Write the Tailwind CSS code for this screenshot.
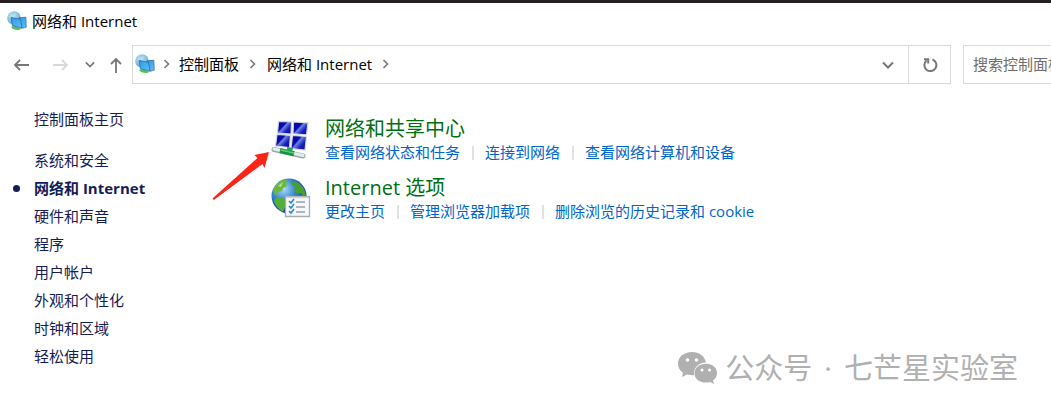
<!DOCTYPE html>
<html lang="zh-CN">
<head>
  <meta charset="UTF-8">
  <title>网络和 Internet</title>
  <script src="https://cdn.jsdelivr.net/npm/@tailwindcss/browser@4"></script>
</head>
<body class="relative min-h-screen overflow-hidden bg-white font-['Open_Sans','Noto_Sans_CJK_SC',sans-serif] text-[15px] leading-5 text-black">
  <svg class="absolute size-0" aria-hidden="true">
    <defs>
      <linearGradient id="screen" x1="0" y1="0" x2="1" y2="1">
        <stop offset="0" stop-color="#2a96ea"/><stop offset="1" stop-color="#5cc2fb"/>
      </linearGradient>
      <linearGradient id="navy" x1="0" y1="0" x2="1" y2=".8">
        <stop offset="0" stop-color="#0508a0"/><stop offset=".42" stop-color="#0a0dae"/><stop offset=".5" stop-color="#6c86e2"/><stop offset=".75" stop-color="#1a20bc"/><stop offset="1" stop-color="#0a0ca8"/>
      </linearGradient>
      <radialGradient id="ocean" cx=".35" cy=".3" r=".75">
        <stop offset="0" stop-color="#a9dcf5"/><stop offset=".45" stop-color="#3485d0"/><stop offset="1" stop-color="#0c2f86"/>
      </radialGradient>
      <radialGradient id="pale" cx=".4" cy=".35" r=".7">
        <stop offset="0" stop-color="#d9f0fa"/><stop offset="1" stop-color="#4a9cc8"/>
      </radialGradient>
      <symbol id="network" viewBox="0 0 20 20">
        <circle cx="7" cy="7" r="6.800" fill="url(#pale)"/>
        <path d="M1.500 5q4-2 6-4.500M1 9.500q6-4 12-5M7 1q-3 5-2 12" fill="none" stroke="#8fc9e2" stroke-width=".8"/>
        <path d="M4.500 15.500q4-1 9 2l-1 1.500q-5 .5-8-2z" fill="#4cc552"/>
        <path d="M12 6.800l6.800-.6.400 10-5 1z" fill="url(#screen)" stroke="#2b6f9f" stroke-width=".8"/>
        <path d="M4 6.500l9.500 1.800 1.500 8.700-9.500-2.200z" fill="url(#screen)" stroke="#2b6f9f" stroke-width=".8"/>
        <path d="M13 18l5-1.500" stroke="#9aa9b3" stroke-width="1"/>
      </symbol>
      <symbol id="crumb" viewBox="0 0 8 10"><path d="M1.500 1l4 4-4 4" fill="none" stroke="#777" stroke-width="1.600"/></symbol>
      <symbol id="down" viewBox="0 0 12 8"><path d="M1 1.500l5 5 5-5" fill="none" stroke="#777" stroke-width="2"/></symbol>
    </defs>
  </svg>

  <div class="h-[3px] bg-[#231f20]"></div>

  <header>
    <div class="flex h-[42px] items-center gap-[5px] pb-[6px] pl-[7px]">
      <svg class="size-5"><use href="#network"/></svg>
      <h1>网络和 Internet</h1>
    </div>
    <div class="flex h-[39px] items-center">
      <nav class="flex w-[132px] shrink-0 items-center pl-[13px]" aria-label="导航">
        <button class="mr-[22px]" aria-label="后退">
          <svg class="h-4 w-[17px]" fill="none" stroke="#777" stroke-width="1.800"><path d="M16 8H2M7 3L2 8l5 5"/></svg>
        </button>
        <button class="mr-4" aria-label="前进">
          <svg class="h-4 w-[17px]" fill="none" stroke="#d9d9d9" stroke-width="1.800"><path d="M1 8h14M10 3l5 5-5 5"/></svg>
        </button>
        <button class="mr-[14px]" aria-label="最近的位置"><svg class="h-[7px] w-[10px]"><use href="#down"/></svg></button>
        <button aria-label="上移">
          <svg class="mt-[2px] h-[17px] w-[14px]" fill="none" stroke="#777" stroke-width="1.800"><path d="M7 16V2M2 7l5-5 5 5"/></svg>
        </button>
      </nav>
      <div class="flex h-full flex-1 items-center border border-[#d9d9d9] pl-[2px]">
        <div class="flex items-center pb-[2px]">
          <svg class="size-5"><use href="#network"/></svg>
          <svg class="mx-2 h-[10px] w-2"><use href="#crumb"/></svg>
          <a href="#">控制面板</a>
          <svg class="mx-[10px] h-[10px] w-2"><use href="#crumb"/></svg>
          <a href="#">网络和 Internet</a>
          <svg class="mx-[10px] h-[10px] w-2"><use href="#crumb"/></svg>
        </div>
        <button class="mr-[14px] ml-auto" aria-label="历史地址"><svg class="h-2 w-3"><use href="#down"/></svg></button>
        <button class="flex h-full w-[42px] items-center justify-center border-l border-[#d9d9d9]" aria-label="刷新">
          <svg class="size-4" fill="none" stroke="#777" stroke-width="2"><path d="M10.500 2.500A6 6 0 1 1 4.500 3.500M2 2.200h4.200v4.300"/></svg>
        </button>
      </div>
      <input type="text" aria-label="搜索控制面板" placeholder="搜索控制面板" class="ml-3 h-full w-[88px] border border-r-0 border-[#d9d9d9] pb-[2px] pl-[9px] outline-none placeholder:text-[#6d6d6d]">
    </div>
  </header>

  <div class="flex pt-[25px]">
    <aside class="w-[271px] shrink-0 pl-[34px] text-[#151c55]">
      <a href="#" class="block">控制面板主页</a>
      <ul class="mt-[21px] flex flex-col gap-2">
        <li><a href="#">系统和安全</a></li>
        <li class="relative font-bold before:absolute before:top-[7px] before:-left-[21px] before:size-[7px] before:rounded-full before:bg-[#151c55]"><a href="#" aria-current="page">网络和 Internet</a></li>
        <li><a href="#">硬件和声音</a></li>
        <li><a href="#">程序</a></li>
        <li><a href="#">用户帐户</a></li>
        <li><a href="#">外观和个性化</a></li>
        <li><a href="#">时钟和区域</a></li>
        <li><a href="#">轻松使用</a></li>
      </ul>
    </aside>

    <main class="flex flex-col gap-[9px] pt-2 text-[#0066cc]">
      <section class="flex gap-[14px]">
        <svg class="mt-[3px] size-10 shrink-0" viewBox="0 0 40 40">
          <g fill="url(#navy)" stroke="#d8d9df" stroke-width="1.200">
            <path d="M7.500 1.500l13 .5-.5 12-13.500-.8z"/><path d="M22.500 2l14.500 .8-1.500 12-13.500-1z"/>
            <path d="M6 14.500l13.500.8-1 12.200-14-1.500z"/><path d="M21.500 15.500l14 1-1.500 13.500-14-1.500z"/>
          </g>
          <path d="M3 29.500l29 6.500" stroke="#9ba6a6" stroke-width="5" stroke-linecap="round"/>
          <path d="M3 29l29 6.500" stroke="#e4eded" stroke-width="3" stroke-linecap="round"/>
          <path d="M9 30.500l14 3.200" stroke="#179342" stroke-width="5"/>
          <path d="M10 30l13 3" stroke="#5ed180" stroke-width="1.500"/>
          <path d="M16 27l6 1-1 4-5-1z" fill="#26a650"/>
        </svg>
        <div>
          <h2 class="text-xl leading-6 text-[#006f12]"><a href="#">网络和共享中心</a></h2>
          <div class="mt-px flex h-[25px] items-start">
            <a href="#">查看网络状态和任务</a>
            <span class="mr-[11px] ml-3 mt-1 h-[14px] w-[2px] bg-[#e2e2e2]"></span>
            <a href="#">连接到网络</a>
            <span class="mr-[11px] ml-3 mt-1 h-[14px] w-[2px] bg-[#e2e2e2]"></span>
            <a href="#">查看网络计算机和设备</a>
          </div>
        </div>
      </section>

      <section class="flex gap-[14px]">
        <svg class="mt-[2px] size-10 shrink-0" viewBox="0 0 40 40">
          <circle cx="18" cy="18" r="17.500" fill="url(#ocean)"/>
          <path d="M2 12Q5 4 13 1.500l4 1.500-2 3 1 2-4 2-1 3-4 1-1 3-3-1z" fill="#6cb83f"/>
          <path d="M5 20l5-1 5 3 2 3-3 4-2 5q-7-4-9-11z" fill="#55ae38"/>
          <path d="M20 3q9 1 13 8l2 6-3 1-2-3-4 1-3-4 1-3-4-3z" fill="#489e32"/>
          <path d="M7 8l5-4-2 5z" fill="#b9e08a"/>
          <path d="M14.500 18.500h24v20h-24z" fill="#f6f7f8" stroke="#a5acb2" stroke-width="1.300"/>
          <path d="M15 19.500h23" stroke="#cfd4d8" stroke-width="1.500"/>
          <path d="M25 24h9M25 29h9M25 34h9" stroke="#65748b" stroke-width="1.200"/>
          <path d="M18 23l2 2 3-4M18 28l2 2 3-4M18 33l2 2 3-4" fill="none" stroke="#248bc8" stroke-width="1.600"/>
        </svg>
        <div>
          <h2 class="text-xl leading-6 text-[#006f12]"><a href="#">Internet 选项</a></h2>
          <div class="mt-px flex h-[25px] items-start">
            <a href="#">更改主页</a>
            <span class="mr-[11px] ml-3 mt-1 h-[14px] w-[2px] bg-[#e2e2e2]"></span>
            <a href="#">管理浏览器加载项</a>
            <span class="mr-[11px] ml-3 mt-1 h-[14px] w-[2px] bg-[#e2e2e2]"></span>
            <a href="#">删除浏览的历史记录和 cookie</a>
          </div>
        </div>
      </section>
    </main>
  </div>

  <!-- annotation arrow -->
  <svg class="absolute top-[150px] left-[211px] h-[52px] w-[60px]" fill="#fb2416"><path d="M58 2L43.500 5l3 3L1.500 48.500q.5 1.500 2 1L51.500 14l2 4z"/></svg>

  <!-- channel watermark -->
  <div class="absolute right-[33px] bottom-6 flex items-center gap-3 text-[29px] leading-9 text-[#b0b0b0]">
    <svg class="-mr-1 h-8 w-[39px]" viewBox="0 0 39 32" fill="#b0b0b0">
      <path d="M14 0C6 0 0 5 0 11.700c0 4 2 7 5 9L4 25l5-2.500q4 1 7 .7C15 15 22 10 28 10.500 26.500 4 21 0 14 0z"/>
      <path d="M28 11.700c-6.500 0-11.500 4-11.500 9.500S21 30.500 28 30.500q2 0 4-.6l4 2-1-3.500c2.500-2 4-4.200 4-7.200 0-5.500-4.500-9.500-11-9.500z"/>
      <g fill="#fff"><circle cx="9.500" cy="8" r="1.800"/><circle cx="18.500" cy="8" r="1.800"/><circle cx="24" cy="18" r="1.500"/><circle cx="31.500" cy="18" r="1.500"/></g>
    </svg>
    <span>公众号</span>
    <span>·</span>
    <span>七芒星实验室</span>
  </div>
</body>
</html>
